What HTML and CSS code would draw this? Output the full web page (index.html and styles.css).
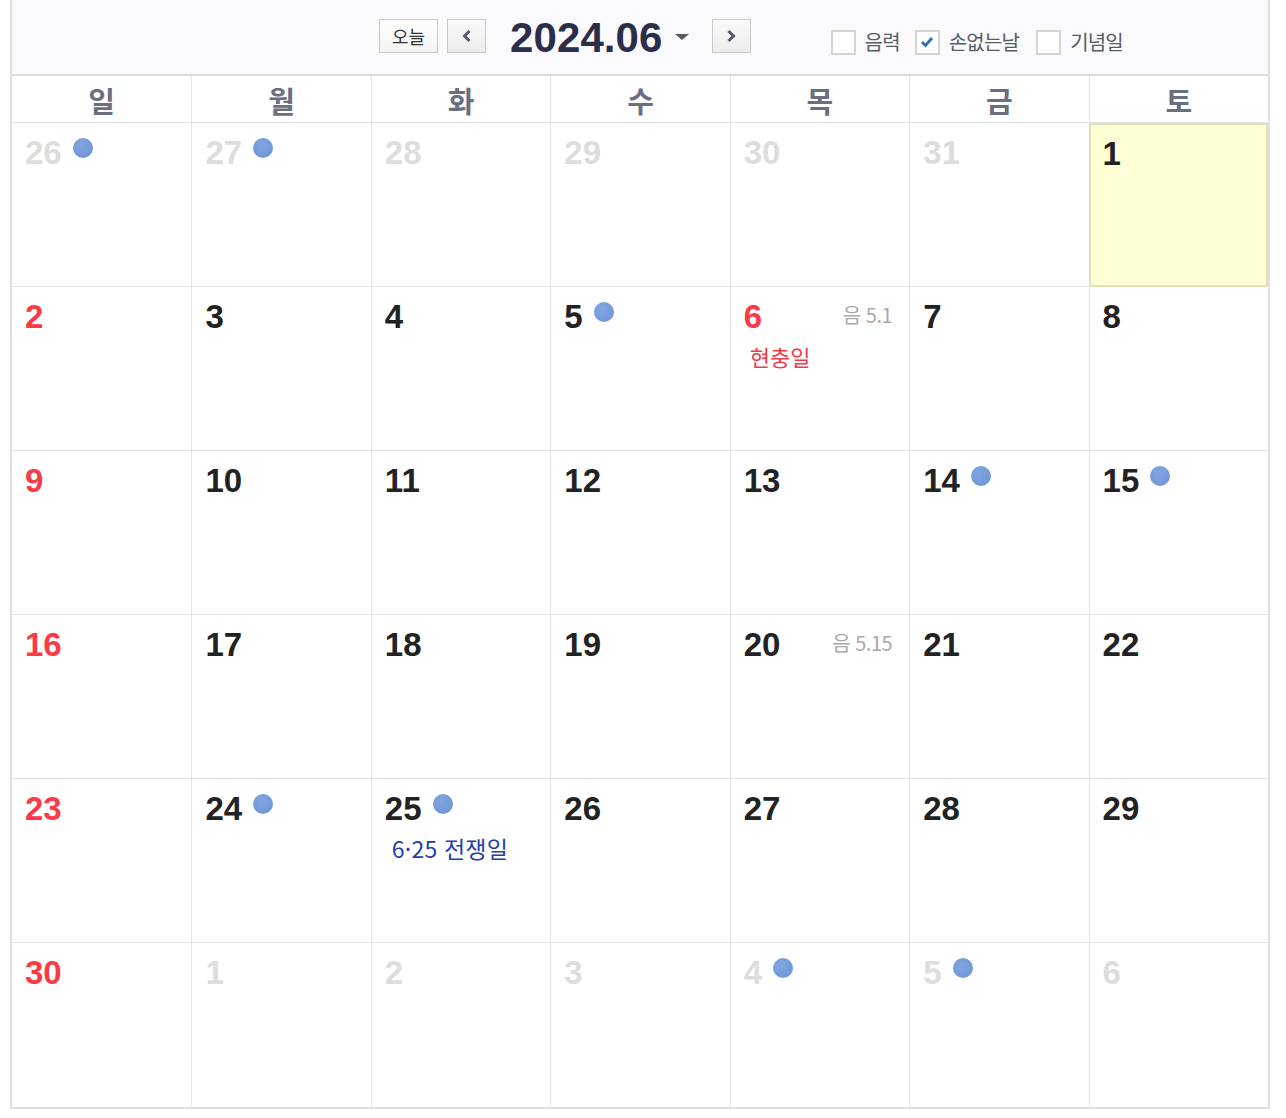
FILE: index.html
```html
<!DOCTYPE html>
<html lang="ko">
<head>
<meta charset="utf-8">
<title>달력</title>
<link rel="stylesheet" href="styles.css">
</head>
<body>
<div class="cal">
  <div class="toolbar">
    <div class="nav">
      <button class="btn today">오늘</button>
      <button class="btn arrow"><svg width="16" height="16" viewBox="0 0 16 16"><path d="M10.5 3 L5.5 8 L10.5 13" fill="none" stroke="#555a66" stroke-width="3"/></svg></button>
      <div class="title">2024.06<span class="caret"></span></div>
      <button class="btn arrow"><svg width="16" height="16" viewBox="0 0 16 16"><path d="M5.5 3 L10.5 8 L5.5 13" fill="none" stroke="#555a66" stroke-width="3"/></svg></button>
    </div>
    <div class="opts">
      <label class="opt"><span class="cb"></span>음력</label>
      <label class="opt"><span class="cb on"><svg width="18" height="18" viewBox="0 0 18 18"><path d="M4 9 L7.5 12.5 L14 5" fill="none" stroke="#2f6fbf" stroke-width="2.8"/></svg></span>손없는날</label>
      <label class="opt"><span class="cb"></span>기념일</label>
    </div>
  </div>
  <div class="week">
    <div>일</div><div>월</div><div>화</div><div>수</div><div>목</div><div>금</div><div>토</div>
  </div>
  <div class="grid">
    <div class="cell"><div class="top"><span class="num other">26</span><span class="dot"></span></div></div>
    <div class="cell"><div class="top"><span class="num other">27</span><span class="dot"></span></div></div>
    <div class="cell"><div class="top"><span class="num other">28</span></div></div>
    <div class="cell"><div class="top"><span class="num other">29</span></div></div>
    <div class="cell"><div class="top"><span class="num other">30</span></div></div>
    <div class="cell"><div class="top"><span class="num other">31</span></div></div>
    <div class="cell today-cell"><div class="top"><span class="num">1</span></div></div>

    <div class="cell"><div class="top"><span class="num sun">2</span></div></div>
    <div class="cell"><div class="top"><span class="num">3</span></div></div>
    <div class="cell"><div class="top"><span class="num">4</span></div></div>
    <div class="cell"><div class="top"><span class="num">5</span><span class="dot"></span></div></div>
    <div class="cell"><div class="top"><span class="num sun">6</span><span class="lunar">음 5.1</span></div><div class="holiday">현충일</div></div>
    <div class="cell"><div class="top"><span class="num">7</span></div></div>
    <div class="cell"><div class="top"><span class="num">8</span></div></div>

    <div class="cell"><div class="top"><span class="num sun">9</span></div></div>
    <div class="cell"><div class="top"><span class="num">10</span></div></div>
    <div class="cell"><div class="top"><span class="num">11</span></div></div>
    <div class="cell"><div class="top"><span class="num">12</span></div></div>
    <div class="cell"><div class="top"><span class="num">13</span></div></div>
    <div class="cell"><div class="top"><span class="num">14</span><span class="dot"></span></div></div>
    <div class="cell"><div class="top"><span class="num">15</span><span class="dot"></span></div></div>

    <div class="cell"><div class="top"><span class="num sun">16</span></div></div>
    <div class="cell"><div class="top"><span class="num">17</span></div></div>
    <div class="cell"><div class="top"><span class="num">18</span></div></div>
    <div class="cell"><div class="top"><span class="num">19</span></div></div>
    <div class="cell"><div class="top"><span class="num">20</span><span class="lunar">음 5.15</span></div></div>
    <div class="cell"><div class="top"><span class="num">21</span></div></div>
    <div class="cell"><div class="top"><span class="num">22</span></div></div>

    <div class="cell"><div class="top"><span class="num sun">23</span></div></div>
    <div class="cell"><div class="top"><span class="num">24</span><span class="dot"></span></div></div>
    <div class="cell"><div class="top"><span class="num">25</span><span class="dot"></span></div><div class="memo">6·25 전쟁일</div></div>
    <div class="cell"><div class="top"><span class="num">26</span></div></div>
    <div class="cell"><div class="top"><span class="num">27</span></div></div>
    <div class="cell"><div class="top"><span class="num">28</span></div></div>
    <div class="cell"><div class="top"><span class="num">29</span></div></div>

    <div class="cell"><div class="top"><span class="num sun">30</span></div></div>
    <div class="cell"><div class="top"><span class="num other">1</span></div></div>
    <div class="cell"><div class="top"><span class="num other">2</span></div></div>
    <div class="cell"><div class="top"><span class="num other">3</span></div></div>
    <div class="cell"><div class="top"><span class="num other">4</span><span class="dot"></span></div></div>
    <div class="cell"><div class="top"><span class="num other">5</span><span class="dot"></span></div></div>
    <div class="cell"><div class="top"><span class="num other">6</span></div></div>
  </div>
</div>
</body>
</html>
```

FILE: styles.css
```css
* { box-sizing: border-box; }
html, body { margin: 0; padding: 0; background: #fff; }
body {
  font-family: "Liberation Sans", "Noto Sans CJK KR", sans-serif;
  color: #222;
}
.cal {
  margin-left: 10px;
  width: 1260px;
  border-left: 2px solid #e0e0e0;
  border-right: 2px solid #e0e0e0;
  border-bottom: 2px solid #e0e0e0;
}
.toolbar {
  height: 76px;
  background: #faf9fd;
  border-bottom: 2px solid #dcdcdf;
  display: flex;
}
.nav {
  display: flex;
  align-items: flex-start;
  padding-left: 367px;
  padding-top: 19px;
}
.btn {
  height: 34px;
  border: 1px solid #c9c9c9;
  background: linear-gradient(#ffffff, #f3f3f3);
  padding: 0;
  margin: 0;
  display: flex;
  align-items: center;
  justify-content: center;
  font-family: "Noto Sans CJK KR", sans-serif;
  font-size: 18px;
  color: #333;
}
.btn.today { width: 59px; }
.btn.arrow { width: 39px; margin-left: 9px; background: linear-gradient(#f9f9f9, #ececec); }
.title {
  font-family: "Liberation Sans", sans-serif;
  font-weight: bold;
  font-size: 42px;
  line-height: 38px;
  color: #2b2e48;
  margin-left: 24px;
  display: flex;
  align-items: center;
  letter-spacing: 0.1px;
}
.caret {
  width: 0; height: 0;
  border-left: 7px solid transparent;
  border-right: 7px solid transparent;
  border-top: 6px solid #555a66;
  margin-left: 12px;
  margin-right: 14px;
  margin-top: -2px;
}
.opts {
  display: flex;
  align-items: center;
  padding-top: 29px;
  align-self: flex-start;
  margin-left: 80px;
}
.opt {
  display: flex;
  align-items: center;
  font-family: "Noto Sans CJK KR", sans-serif;
  font-size: 20px;
  color: #555c66;
  margin-right: 15px;
  letter-spacing: -0.8px;
  line-height: 26px;
}
.opt:nth-child(2) { margin-right: 17px; }
.cb {
  width: 25px; height: 25px;
  border: 2px solid #d3d3d3;
  background: #fff;
  margin-right: 9px;
  display: flex;
  align-items: center;
  justify-content: center;
}
.week {
  display: grid;
  grid-template-columns: repeat(7, 1fr);
  height: 47px;
  border-bottom: 1px solid #dfe2e6;
}
.week div {
  font-family: "Noto Sans CJK KR", sans-serif;
  font-weight: bold;
  font-size: 29px;
  color: #6b6d80;
  text-align: center;
  line-height: 48px;
  border-left: 1px solid #e3e5e9;
}
.week div:first-child { border-left: none; }
.grid {
  display: grid;
  grid-template-columns: repeat(7, 1fr);
  grid-auto-rows: 164px;
}
.cell {
  border-left: 1px solid #e3e5e9;
  border-bottom: 1px solid #e3e5e9;
  padding: 11px 17px 0 13px;
}
.cell:nth-child(7n+1) { border-left: none; }
.cell:nth-last-child(-n+7) { border-bottom: none; }
.today-cell {
  background: #ffffd6;
  border: 2px solid #e2e0b8;
  padding: 10px 16px 0 12px;
}
.top {
  display: flex;
  align-items: flex-start;
}
.num {
  font-family: "Liberation Sans", sans-serif;
  font-weight: bold;
  font-size: 33px;
  line-height: 38px;
  color: #222;
}
.num.sun { color: #fb3a48; }
.num.other { color: #dddddd; }
.dot {
  width: 20px; height: 20px;
  border-radius: 50%;
  background: radial-gradient(circle at 40% 35%, #82a6e2, #6a91d3);
  margin-left: 11px;
  margin-top: 4px;
}
.lunar {
  margin-left: auto;
  margin-top: 2px;
  font-family: "Noto Sans CJK KR", sans-serif;
  font-size: 20px;
  line-height: 29px;
  color: #a9a9a9;
  letter-spacing: -0.5px;
}
.holiday, .memo {
  font-family: "Noto Sans CJK KR", sans-serif;
  font-size: 22px;
  margin-left: 6px;
  margin-top: 5px;
  line-height: 30px;
}
.holiday { color: #f23a48; }
.memo { color: #1d3fb0; margin-left: 7px; font-size: 23px; letter-spacing: 0.2px; }
```
